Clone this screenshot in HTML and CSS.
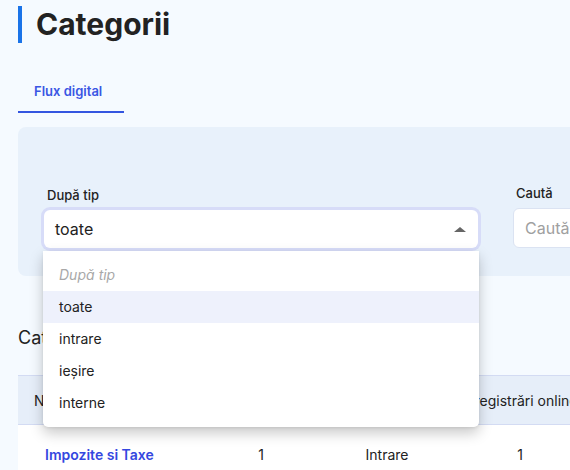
FILE: index.html
```html
<!DOCTYPE html>
<html lang="ro">
<head>
<meta charset="utf-8">
<title>Categorii</title>
<link rel="stylesheet" href="styles.css">
</head>
<body>
<div class="page">
  <h1 class="title">Categorii</h1>
  <div class="tabs">
    <div class="tab active">Flux digital</div>
  </div>
  <div class="panel">
    <div class="filters">
      <div class="field field-type">
        <label class="label">După tip</label>
        <div class="select">
          <span class="select-value">toate</span>
          <span class="caret"></span>
          <ul class="menu">
            <li class="menu-item placeholder">După tip</li>
            <li class="menu-item selected">toate</li>
            <li class="menu-item">intrare</li>
            <li class="menu-item">ieșire</li>
            <li class="menu-item">interne</li>
          </ul>
        </div>
      </div>
      <div class="field field-search">
        <label class="label">Caută</label>
        <div class="input"><span class="input-placeholder">Caută</span></div>
      </div>
    </div>
  </div>
  <h2 class="section-title">Categorii</h2>
  <div class="table">
    <div class="row head">
      <div class="cell c1">Nume</div>
      <div class="cell c2">Cod</div>
      <div class="cell c3">Tip</div>
      <div class="cell c4">Înregistrări online</div>
    </div>
    <div class="row body">
      <div class="cell c1 name">Impozite si Taxe</div>
      <div class="cell c2">1</div>
      <div class="cell c3">Intrare</div>
      <div class="cell c4">1</div>
    </div>
  </div>
</div>
</body>
</html>
```
FILE: styles.css
```css
html, body {
  margin: 0;
  padding: 0;
  background: #f5faff;
  overflow: hidden;
  font-family: Inter, "Noto Sans", sans-serif;
  color: #222;
}
.page {
  padding: 6px 0 0 18px;
  width: 620px;
}
.title {
  margin: 0;
  border-left: 4px solid #1a73e8;
  padding-left: 14px;
  height: 37px;
  line-height: 37px;
  font-size: 30px;
  font-weight: 700;
  color: #222;
}
.tabs {
  margin-top: 26px;
  display: flex;
}
.tab {
  padding: 12px 16px 10px;
  line-height: 20px;
  font-size: 13px;
  font-weight: 600;
  color: #3a56e4;
  border-bottom: 2px solid #3355e0;
  width: 74px;
}
.panel {
  margin-top: 14px;
  background: #e8f1fb;
  border-radius: 8px 0 0 8px;
  padding: 57px 0 28px 26px;
}
.filters {
  display: flex;
  gap: 35px;
  align-items: flex-end;
}
.field {
  display: flex;
  flex-direction: column;
  gap: 6px;
}
.label {
  margin-left: 3px;
  font-size: 13px;
  font-weight: 500;
  line-height: 18px;
  color: #222;
}
.select {
  position: relative;
  box-sizing: border-box;
  width: 434px;
  height: 38px;
  background: #fff;
  border-radius: 6px;
  box-shadow: 0 0 0 3px #d7dcf8;
  display: flex;
  align-items: center;
  padding: 0 12px 0 11px;
}
.select-value {
  flex: 1;
  font-size: 16px;
  color: #222;
}
.caret {
  width: 0;
  height: 0;
  border-left: 6px solid transparent;
  border-right: 6px solid transparent;
  border-bottom: 5px solid #666;
}
.menu {
  position: absolute;
  top: 41px;
  left: -1px;
  width: 436px;
  margin: 0;
  padding: 8px 0;
  list-style: none;
  background: #fff;
  border-radius: 0 0 5px 5px;
  box-shadow: 0 6px 14px rgba(0, 0, 0, 0.22), 0 1px 3px rgba(0, 0, 0, 0.08);
  z-index: 5;
}
.menu-item {
  height: 32px;
  line-height: 32px;
  padding-left: 16px;
  font-size: 14px;
  color: #222;
}
.menu-item.placeholder {
  font-style: italic;
  color: #a8a8a8;
}
.menu-item.selected {
  background: #eef1fc;
}
.input {
  box-sizing: border-box;
  width: 200px;
  height: 40px;
  background: #fff;
  border: 1px solid #dbe3f2;
  border-radius: 6px;
  display: flex;
  align-items: center;
  padding-left: 11px;
}
.input-placeholder {
  font-size: 16px;
  color: #a0a0a0;
}
.section-title {
  margin: 50px 0 25px;
  font-size: 18px;
  font-weight: 400;
  line-height: 24px;
  color: #222;
}
.table {
  width: 562px;
  background: #fff;
}
.row {
  display: grid;
  grid-template-columns: 190px 106px 146px 120px;
  align-items: center;
}
.row.head {
  height: 48px;
  background: #e6eef9;
  border-top: 1px solid #d3dbf3;
  border-bottom: 1px solid #d3dbf3;
  font-size: 14px;
}
.row.body {
  height: 58px;
  font-size: 14px;
}
.cell {
  text-align: center;
  white-space: nowrap;
}
.head .c1 {
  text-align: left;
  padding-left: 16px;
}
.body .c1 {
  text-align: left;
  padding-left: 27px;
}
.name {
  font-weight: 600;
  color: #3447e0;
}
```
